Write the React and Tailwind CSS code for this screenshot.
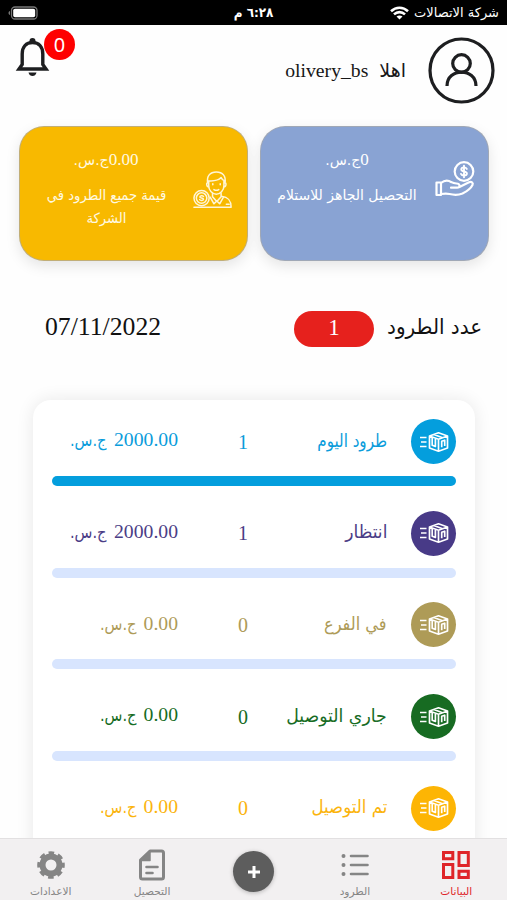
const ROWS = [
  { name: "طرود اليوم", fit: "scale-x-[0.84]", count: "1", amount: "2000.00", text: "text-[#0a9cdb]", bg: "bg-[#049edd]", bar: "bg-[#049edd]" },
  { name: "انتظار", fit: "scale-x-[0.95]", count: "1", amount: "2000.00", text: "text-[#4b3d86]", bg: "bg-[#483a87]", bar: "bg-[#d8e5fe]" },
  { name: "في الفرع", fit: "scale-x-[0.9]", count: "0", amount: "0.00", text: "text-[#ae9b58]", bg: "bg-[#ae9b57]", bar: "bg-[#d8e5fe]" },
  { name: "جاري التوصيل", fit: "scale-x-[0.96]", count: "0", amount: "0.00", text: "text-[#176c24]", bg: "bg-[#176b22]", bar: "bg-[#d8e5fe]" },
  { name: "تم التوصيل", fit: "scale-x-[0.92]", count: "0", amount: "0.00", text: "text-[#fbb40c]", bg: "bg-[#fdb504]", bar: "bg-[#d8e5fe]" },
];

const LATIN = "font-['Liberation_Serif',serif]";
const ARABIC = "font-['DejaVu_Sans',sans-serif]";

function ParcelIcon() {
  return (
    <svg width="30" height="22" viewBox="0 0 30 22" fill="none" stroke="white" strokeWidth="1.700" strokeLinejoin="round">
      <path d="M1 6.500h6.500M2 11h5.500M1 15.500h6.500" strokeWidth="1.500" />
      <path d="M10.500 5 19.500 1.800 28.500 5v12L19.500 20.200l-9-3.200zM10.500 5l9 3.300 9-3.300M19.500 8.300V20M14.800 3.500l8.800 3.200" />
      <path d="M13.200 7v7.300l3.200 1.100V8M22.700 16.300v-6l3-1.100V15" />
    </svg>
  );
}

function HandCoinIcon() {
  return (
    <svg width="40" height="36" viewBox="0 0 40 36" fill="none" stroke="white" strokeWidth="2.200" strokeLinejoin="round" strokeLinecap="round">
      <circle cx="29" cy="10.500" r="9.300" />
      <path d="M31.800 7.900c-.6-1.100-1.600-1.500-2.800-1.500-1.600 0-2.700.8-2.700 2 0 2.800 5.600 1.400 5.600 4.200 0 1.200-1.200 2-2.900 2-1.400 0-2.500-.5-3-1.700M29 4.800v11.400" strokeWidth="1.900" />
      <path d="M1.500 21.500h4.500v12.500H1.500zM6 22c3-2.500 7-3 10.500-.8 1.500 1 3 1.300 5 1.300 3.500 0 4.500 4 .5 4.200h-6M24.500 26l9-4.500c3-1.500 5 .5 4 2.500-1.500 3-6 6.500-10 8.500-5 2-9 1.500-13 .5-3-.7-5-.5-8.500 0" />
    </svg>
  );
}

function ManCoinIcon() {
  return (
    <svg width="40" height="40" viewBox="0 0 42 42" fill="none" stroke="#fff6d8" strokeWidth="1.600" strokeLinejoin="round" strokeLinecap="round">
      <path d="M15.500 13.500C14 6.500 18 2 24.500 2s10.500 4.500 9 11.500M16 11.500c5 .5 11-1 13.500-3.500 1 2 2 3 4 3.500M16.500 11.500v5c0 5 4 9 8 9s8-4 8-9v-5M16 13c-2.500 0-2 5 .8 5M33 13c2.500 0 2 5-.8 5" />
      <path d="M20.800 14.500v1M28.600 14.500v1M22 20.500c1.500 1 3.500 1 5 0M20.500 24.500v3.500l4.500 5 4.500-5v-3.500M18 28.500l4 7 3-3 3 3 4-7M30 27.500c7 1 10 4 10 11.500H1M35 36h3" />
      <circle cx="9" cy="29.500" r="8" />
      <circle cx="9" cy="29.500" r="5.500" />
      <path d="M11 27.700c-1-1.200-3.800-1-3.800.6 0 1.500 3.800.9 3.800 2.500 0 1.500-3 1.600-4 .3" />
    </svg>
  );
}

function StatusBar() {
  return (
    <header className={`grid h-[25px] shrink-0 grid-cols-3 items-center bg-black text-white ${ARABIC}`}>
      <div className="flex items-center gap-[5px] pr-[8px]">
        <span className="text-[13px] leading-none whitespace-nowrap">شركة الاتصالات</span>
        <svg width="19" height="14" viewBox="0 0 19 14" fill="none" stroke="white" strokeWidth="2.600">
          <path d="M1 5.200C6 .5 13 .5 18 5.200M4 8.400c3.200-3 7.800-3 11 0" />
          <path d="M6.500 10.600c1.800-1.500 4.200-1.500 6 0l-3 3z" fill="white" stroke="none" />
        </svg>
      </div>
      <div className="text-center text-[13px] font-bold leading-none"><span className="inline-block scale-x-[0.92]">٦:٢٨ م</span></div>
      <div className="flex justify-end pl-[8px]">
        <svg width="30" height="14" viewBox="0 0 30 14">
          <rect x="3.500" y="1" width="25.500" height="12" rx="3.500" fill="none" stroke="#777" strokeWidth="1.300" />
          <rect x="5.200" y="2.700" width="22" height="8.600" rx="1.800" fill="white" />
          <path d="M2 5C0 5.500 0 8.500 2 9z" fill="#777" />
        </svg>
      </div>
    </header>
  );
}

function Greeting() {
  return (
    <section className="flex h-[101px] shrink-0 items-start justify-between pr-[12px] pl-[15px] pt-[12px]">
      <div className="flex items-center gap-[22px]">
        <svg width="67" height="67" viewBox="0 0 67 67" fill="none" stroke="#1d1e20" strokeWidth="3.200">
          <circle cx="33.500" cy="33.500" r="31.500" />
          <circle cx="33.500" cy="26.500" r="8.800" />
          <path d="M19 49c0-18.500 29-18.500 29 0" />
        </svg>
        <div className="flex items-baseline gap-[11px] text-[#171717]">
          <span className={`text-[19px] ${ARABIC}`}>اهلا</span>
          <span className={`text-[19.700px] ${LATIN}`}>olivery_bs</span>
        </div>
      </div>
      <div className="relative h-[44px] w-[36px]">
        <svg width="36" height="44" viewBox="0 0 36 44" className="absolute left-0 top-0">
          <circle cx="17.500" cy="4" r="3" fill="#1d1e20" />
          <path d="M7.200 27.500V17c0-7 4-11.500 10.300-11.500S27.800 10 27.800 17v10.500l3.200 4.500H4z" fill="none" stroke="#1d1e20" strokeWidth="3.400" />
          <path d="M13.500 35.500h8c-1 4.800-7 4.800-8 0z" fill="#1d1e20" />
        </svg>
        <span className="absolute -top-[8px] left-[29px] flex size-[31px] items-center justify-center rounded-full bg-[#fe0000] font-['Noto_Sans',sans-serif] text-[20px] leading-none text-white">0</span>
      </div>
    </section>
  );
}

function SummaryCards() {
  const shell = "flex h-[135px] w-[229px] rounded-[25px] border border-[#a9a9a9]/70 text-white shadow-[0_5px_14px_rgba(0,0,0,0.10)]";
  return (
    <section className="flex h-[136px] shrink-0 justify-between pr-[18px] pl-[19px]">
      <div className={`${shell} bg-[#89a3d3]`}>
        <div className="w-[55px] pr-[13px] pt-[34px]"><HandCoinIcon /></div>
        <div className="flex w-[172px] flex-col items-center pt-[21px]">
          <p className={`text-[17px] leading-[24px] ${LATIN}`}>0<span className={`text-[14px] ${ARABIC}`}>ج.س.</span></p>
          <p className={`mt-[12px] text-[14px] leading-[23px] whitespace-nowrap ${ARABIC}`}>التحصيل الجاهز للاستلام</p>
        </div>
      </div>
      <div className={`${shell} bg-[#f8b900]`}>
        <div className="w-[55px] pr-[14px] pt-[43px]"><ManCoinIcon /></div>
        <div className="flex w-[172px] flex-col items-center pt-[21px] text-[#fff9e3]">
          <p className={`text-[17px] leading-[24px] ${LATIN}`}>0.00<span className={`text-[14px] ${ARABIC}`}>ج.س.</span></p>
          <p className={`mt-[12px] scale-x-[0.94] text-center text-[14px] leading-[23px] whitespace-nowrap ${ARABIC}`}>قيمة جميع الطرود في<br />الشركة</p>
        </div>
      </div>
    </section>
  );
}

function TotalRow() {
  return (
    <section className="mt-[48px] flex h-[37px] shrink-0 items-center justify-between pr-[25px] pl-[45px] text-[#111]">
      <div className="flex items-center gap-[13px]">
        <h1 className={`w-[95px] pb-[3px] text-[21px] leading-none whitespace-nowrap ${ARABIC}`}><span className="inline-block origin-right scale-x-[0.95]">عدد الطرود</span></h1>
        <span className={`flex h-[36px] w-[80px] items-center justify-center rounded-full bg-[#e6211d] text-[23px] text-white ${LATIN}`}>1</span>
      </div>
      <time className={`pb-[4px] text-[25.700px] leading-none ${LATIN}`}>07/11/2022</time>
    </section>
  );
}

function ParcelRow({ row }) {
  return (
    <li className={`h-[91.700px] ${row.text}`}>
      <div className="flex h-[45px] items-center">
        <div className={`flex size-[45px] shrink-0 items-center justify-center rounded-full ${row.bg}`}><ParcelIcon /></div>
        <span className={`mr-[24px] w-[124px] pb-[2px] text-[18px] leading-none whitespace-nowrap ${ARABIC}`}><span className={`inline-block origin-right ${row.fit}`}>{row.name}</span></span>
        <span className={`w-[40px] text-center text-[20px] ${LATIN}`}>{row.count}</span>
        <span className={`mr-[45px] flex items-baseline gap-[7px] pb-[3px] whitespace-nowrap text-[19.700px] ${LATIN}`}>
          {row.amount}
          <span className={`inline-block origin-right scale-x-[0.86] text-[17px] ${ARABIC}`}>ج.س.</span>
        </span>
      </div>
      <div className={`mt-[12px] h-[10px] rounded-full ${row.bar}`} />
    </li>
  );
}

function Tab({ label, active, children }) {
  return (
    <div className={`flex w-[101.400px] flex-col items-center pt-[10px] ${active ? "text-[#df2529]" : "text-[#858585]"}`}>
      <div className="flex h-[32px] items-center">{children}</div>
      <span className={`mt-[3px] text-[10.600px] leading-[14px] whitespace-nowrap ${ARABIC}`}>{label}</span>
    </div>
  );
}

function TabBar() {
  return (
    <nav className="flex h-[62px] shrink-0 border-t border-[#e2e0e1] bg-[#f2f0f1]">
      <Tab label="البيانات" active>
        <svg width="28" height="28" viewBox="0 0 28 28" fill="none" stroke="currentColor" strokeWidth="3">
          <path d="M1.500 1.500h9.300v6.300H1.500zM17 1.500h9.300v13H17zM1.500 13.500h9.300v13H1.500zM17 20.200h9.300v6.300H17z" />
        </svg>
      </Tab>
      <Tab label="الطرود">
        <svg width="28" height="24" viewBox="0 0 28 24" fill="none" stroke="currentColor" strokeWidth="2.600" strokeLinecap="round">
          <path d="M10 3h16.500M10 12h16.500M10 21h16.500" />
          <path d="M2.500 3h.01M2.500 12h.01M2.500 21h.01" strokeWidth="4" />
        </svg>
      </Tab>
      <div className="flex w-[101.400px] justify-center pt-[12px]">
        <div className="flex size-[41px] items-center justify-center rounded-full bg-[#5d5d5d] shadow-[0_1px_4px_rgba(0,0,0,0.25)]">
          <svg width="14" height="14" viewBox="0 0 14 14" stroke="white" strokeWidth="3"><path d="M7 1v12M1 7h12" /></svg>
        </div>
      </div>
      <Tab label="التحصيل">
        <svg width="26" height="32" viewBox="0 0 26 32" fill="none" stroke="currentColor" strokeWidth="3" strokeLinejoin="round">
          <path d="M11 2h11.500a2 2 0 0 1 2 2v24a2 2 0 0 1-2 2H3.500a2 2 0 0 1-2-2V11z" />
          <path d="M11 2v9.500H2z" fill="currentColor" strokeWidth="1.500" />
          <path d="M7.500 18h11M7.500 24h6" strokeWidth="2.600" strokeLinecap="round" />
        </svg>
      </Tab>
      <Tab label="الاعدادات">
        <svg width="28" height="28" viewBox="0 0 28 28" fill="none" stroke="currentColor">
          <circle cx="14" cy="14" r="8.500" strokeWidth="6" />
          <circle cx="14" cy="14" r="12.300" strokeWidth="3" strokeDasharray="5.600 4.060" strokeDashoffset="2.800" />
        </svg>
      </Tab>
    </nav>
  );
}

export default function App() {
  return (
    <div dir="rtl" className="flex h-[900px] w-[507px] flex-col overflow-hidden bg-[#fefefe]">
      <StatusBar />
      <Greeting />
      <SummaryCards />
      <TotalRow />
      <main className="min-h-0 flex-1 overflow-hidden pt-[53px]">
        <ul className="mr-[32px] ml-[33px] h-[520px] rounded-t-[18px] bg-white px-[19px] pt-[19px] shadow-[0_0_18px_rgba(0,0,0,0.09)]">
          {ROWS.map((row) => <ParcelRow key={row.name} row={row} />)}
        </ul>
      </main>
      <TabBar />
    </div>
  );
}
